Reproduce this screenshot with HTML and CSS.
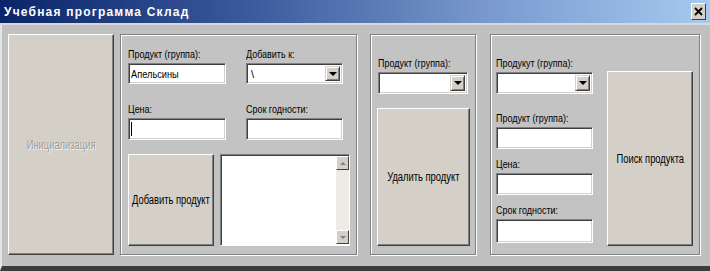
FILE: index.html
```html
<!DOCTYPE html>
<html lang="ru">
  <head>
    <meta charset="UTF-8" />
    <meta name="viewport" content="width=device-width, initial-scale=1.0" />
    <title>Учебная программа Склад</title>
    <link rel="stylesheet" href="styles.css">
  </head>
  <body>
    <div class="window">
      <div class="titlebar">
        <span class="title">Учебная программа Склад</span>
        <span class="close-btn">
          <svg width="9" height="9" viewBox="0 0 9 9">
            <path d="M1 1 L8 8 M8 1 L1 8" stroke="#000" stroke-width="1.8" />
          </svg>
        </span>
      </div>

      <div class="client">
        <div class="btn btn-init disabled"><span class="caption">Инициализация</span></div>

        <!-- add product -->
        <div class="group group-add">
          <div class="add-fields">
            <div class="field">
              <label>Продукт (группа):</label>
              <div class="edit"><span class="value">Апельсины</span></div>
            </div>
            <div class="field">
              <label>Добавить к:</label>
              <div class="combo"><span class="combo-text">\</span><span class="combo-arrow"></span></div>
            </div>
            <div class="field">
              <label>Цена:</label>
              <div class="edit"><span class="caret"></span></div>
            </div>
            <div class="field">
              <label>Срок годности:</label>
              <div class="edit"></div>
            </div>
          </div>
          <div class="add-actions">
            <div class="btn btn-add"><span class="caption">Добавить продукт</span></div>
            <div class="listbox">
              <div class="list-body"></div>
              <div class="scrollbar">
                <span class="scroll-btn up"></span>
                <span class="scroll-track"></span>
                <span class="scroll-btn down"></span>
              </div>
            </div>
          </div>
        </div>

        <!-- delete product -->
        <div class="group group-del">
          <label>Продукт (группа):</label>
          <div class="combo"><span class="combo-text"></span><span class="combo-arrow"></span></div>
          <div class="btn btn-del"><span class="caption">Удалить продукт</span></div>
        </div>

        <!-- search product -->
        <div class="group group-find">
          <div class="find-fields">
            <label>Продукут (группа):</label>
            <div class="combo"><span class="combo-text"></span><span class="combo-arrow"></span></div>
            <label class="gap-lg">Продукт (группа):</label>
            <div class="edit"></div>
            <label class="gap-sm">Цена:</label>
            <div class="edit"></div>
            <label class="gap-sm">Срок годности:</label>
            <div class="edit tall"></div>
          </div>
          <div class="btn btn-find"><span class="caption">Поиск продукта</span></div>
        </div>
      </div>
    </div>
  </body>
</html>
```

FILE: styles.css
```css
html,
body {
  margin: 0;
  padding: 0;
  background-color: #c0c0c0;
}

body {
  font-family: "Liberation Sans", Arial, sans-serif;
  font-size: 11px;
  color: #000;
}

.window {
  width: 710px;
  height: 271px;
  box-sizing: border-box;
  background-color: #c0c0c0;
  border-left: 2px solid #e4e4e4;
  border-bottom: 5px solid #3c3c3c;
  display: flex;
  flex-direction: column;
}

.titlebar {
  height: 23px;
  margin-left: -2px;
  display: flex;
  align-items: center;
  justify-content: space-between;
  background: linear-gradient(to right, #0a246a 0%, #3a5a9c 35%, #7b9bd0 70%, #a6caf0 100%);
  border-bottom: 2px solid #d8d8d8;
}

.title {
  font-weight: bold;
  font-size: 12px;
  letter-spacing: 1.2px;
  color: #fff;
  padding-left: 4px;
}

.close-btn {
  width: 15px;
  height: 17px;
  margin-right: 4px;
  box-sizing: border-box;
  background-color: #d4d0c8;
  border: 1px solid;
  border-color: #fff #404040 #404040 #fff;
  display: flex;
  align-items: center;
  justify-content: center;
}

.client {
  flex: 1;
  display: flex;
  padding: 9px 10px 11px 6px;
}

/* narrow system font look */
label,
.value {
  display: block;
  white-space: nowrap;
  font-size: 11.5px;
  transform: scaleX(0.78);
  transform-origin: left center;
}

.value {
  display: inline-block;
  font-size: 11px;
  transform: scaleX(0.84);
}

/* buttons */
.btn {
  box-sizing: border-box;
  background-color: #d4d0c8;
  border: 1px solid;
  border-color: #fff #404040 #404040 #fff;
  box-shadow: inset -1px -1px 0 #808080;
  display: flex;
  align-items: center;
  justify-content: center;
  font-size: 12px;
}

.caption {
  display: inline-block;
  white-space: nowrap;
  transform: scaleX(0.78);
}

.btn.disabled {
  color: #9a9a9a;
  text-shadow: 1px 1px 0 #f4f4f4;
}

.btn-init {
  width: 106px;
  margin-right: 6px;
}

/* group boxes */
.group {
  box-sizing: border-box;
  border: 1px solid #808080;
  box-shadow: 1px 1px 0 #fff, inset 1px 1px 0 #fff;
  background-color: #c3c3c3;
}

label {
  height: 15px;
  line-height: 13px;
}

.edit,
.combo {
  box-sizing: border-box;
  height: 21px;
  background-color: #fff;
  border: 1px solid;
  border-color: #808080 #fff #fff #808080;
  box-shadow: inset 1px 1px 0 #404040, inset -1px -1px 0 #d4d0c8;
  padding: 3px 2px;
  font-size: 11px;
  line-height: 14px;
}

.edit.tall {
  height: 24px;
}

.caret {
  display: inline-block;
  width: 1px;
  height: 14px;
  background-color: #000;
  vertical-align: top;
}

.combo {
  display: flex;
  padding: 2px;
}

.combo-text {
  flex: 1;
  padding: 1px 2px;
}

.combo-arrow {
  width: 15px;
  box-sizing: border-box;
  background-color: #d4d0c8;
  border: 1px solid;
  border-color: #d4d0c8 #404040 #404040 #d4d0c8;
  box-shadow: inset 1px 1px 0 #fff, inset -1px -1px 0 #808080;
  display: flex;
  align-items: center;
  justify-content: center;
}

.combo-arrow::after {
  content: "";
  border-left: 4px solid transparent;
  border-right: 4px solid transparent;
  border-top: 4px solid #000;
}

/* add product group */
.group-add {
  width: 237px;
  margin-right: 13px;
  padding: 13px 6px 8px 7px;
  display: flex;
  flex-direction: column;
}

.add-fields {
  display: grid;
  grid-template-columns: 98px 97px;
  column-gap: 20px;
  row-gap: 19px;
}

.add-fields .field:nth-child(n + 3) .edit {
  height: 22px;
}

.add-actions {
  display: flex;
  margin-top: 14px;
  flex: 1;
}

.btn-add {
  width: 86px;
  margin-right: 6px;
}

.listbox {
  width: 131px;
  display: flex;
  box-sizing: border-box;
  background-color: #fff;
  border: 1px solid;
  border-color: #808080 #fff #fff #808080;
  box-shadow: inset 1px 1px 0 #404040;
  padding: 1px 0 1px 1px;
}

.list-body {
  flex: 1;
}

.scrollbar {
  width: 13px;
  display: flex;
  flex-direction: column;
  background-color: #ecebe6;
}

.scroll-track {
  flex: 1;
}

.scroll-btn {
  height: 14px;
  box-sizing: border-box;
  background-color: #d4d0c8;
  border: 1px solid;
  border-color: #fff #404040 #404040 #fff;
  display: flex;
  align-items: center;
  justify-content: center;
}

.scroll-btn.up::after {
  content: "";
  border-left: 3px solid transparent;
  border-right: 3px solid transparent;
  border-bottom: 3px solid #808080;
}

.scroll-btn.down::after {
  content: "";
  border-left: 3px solid transparent;
  border-right: 3px solid transparent;
  border-top: 3px solid #808080;
}

/* delete product group */
.group-del {
  width: 106px;
  margin-right: 14px;
  padding: 22px 6px 8px 7px;
  display: flex;
  flex-direction: column;
}

.group-del .combo {
  width: 90px;
  height: 22px;
}

.btn-del {
  flex: 1;
  margin-top: 14px;
  width: 93px;
  margin-left: -1px;
}

/* search product group */
.group-find {
  width: 210px;
  padding: 22px 6px 7px 5px;
  display: flex;
}

.find-fields {
  width: 97px;
  margin-right: 14px;
}

.find-fields .combo,
.find-fields .edit {
  height: 22px;
}

.find-fields .edit.tall {
  height: 24px;
}

.gap-lg {
  margin-top: 18px;
}

.gap-sm {
  margin-top: 9px;
}

.btn-find {
  width: 86px;
  margin-top: 14px;
  margin-bottom: 1px;
}
```
